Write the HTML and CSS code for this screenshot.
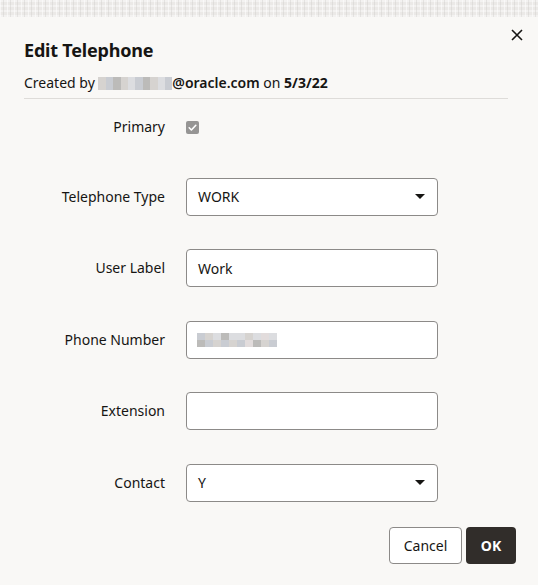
FILE: index.html
```html
<!DOCTYPE html>
<html lang="en">
<head>
<meta charset="utf-8">
<title>Edit Telephone</title>
<link rel="stylesheet" href="styles.css">
</head>
<body>
<div class="backdrop-strip"></div>
<div class="dialog">
  <div class="dialog-header">
    <div class="header-text">
      <h1 class="title">Edit Telephone</h1>
      <div class="created">Created by <span class="mosaic mosaic-email"><i class="c1"></i><i class="c2"></i><i class="c3"></i><i class="c1"></i><i class="c4"></i><i class="c2"></i><i class="c3"></i><i class="c1"></i><i class="c4"></i><i class="c2"></i></span><span class="strong">@oracle.com</span> on <span class="bold">5/3/22</span></div>
    </div>
    <button class="close" aria-label="Close">
      <svg width="12" height="12" viewBox="0 0 12 12"><path d="M1 1 L11 11 M11 1 L1 11" stroke="#161513" stroke-width="1.6" fill="none"/></svg>
    </button>
  </div>
  <div class="divider"></div>

  <div class="form">
    <div class="label">Primary</div>
    <div class="checkbox-cell">
      <span class="checkbox">
        <svg width="13" height="13" viewBox="0 0 13 13"><path d="M3.2 6.8 L5.4 9 L9.8 4.3" stroke="#ffffff" stroke-width="1.6" fill="none" stroke-linecap="round" stroke-linejoin="round"/></svg>
      </span>
    </div>

    <div class="label">Telephone Type</div>
    <div class="field select"><span class="value">WORK</span><span class="arrow"></span></div>

    <div class="label">User Label</div>
    <div class="field"><span class="value">Work</span></div>

    <div class="label">Phone Number</div>
    <div class="field"><span class="mosaic mosaic-phone"><i class="c2"></i><i class="c3"></i><i class="c1"></i><i class="c2"></i><i class="c4"></i><i class="c1"></i><i class="c3"></i><i class="c2"></i><i class="c4"></i><i class="c1"></i><i class="c4"></i><i class="c2"></i><i class="c1"></i><i class="c5"></i><i class="c4"></i><i class="c3"></i><i class="c5"></i><i class="c1"></i><i class="c4"></i><i class="c2"></i></span></div>

    <div class="label">Extension</div>
    <div class="field"></div>

    <div class="label">Contact</div>
    <div class="field select"><span class="value">Y</span><span class="arrow"></span></div>
  </div>

  <div class="footer">
    <button class="btn btn-secondary">Cancel</button>
    <button class="btn btn-primary">OK</button>
  </div>
</div>
</body>
</html>
```

FILE: styles.css
```css
* { box-sizing: border-box; }

html, body {
  margin: 0;
  padding: 0;
  background: #f9f8f6;
  font-family: "Noto Sans", "Open Sans", sans-serif;
  color: #161513;
}

.backdrop-strip {
  height: 17px;
  background-color: #ebe9e7;
  background-image:
    repeating-linear-gradient(90deg, rgba(255,255,255,0.55) 0 1px, transparent 1px 3px, rgba(200,198,195,0.35) 3px 4px, transparent 4px 7px),
    repeating-linear-gradient(0deg, rgba(255,255,255,0.4) 0 2px, transparent 2px 5px);
}

.dialog {
  padding: 0 22px 0 24px;
}

.dialog-header {
  display: flex;
  justify-content: space-between;
  align-items: flex-start;
}

.title {
  margin: 21px 0 0;
  font-size: 18px;
  line-height: 24px;
  font-weight: 700;
  letter-spacing: -0.2px;
}

.created {
  margin-top: 11px;
  font-size: 14px;
  line-height: 20px;
  display: flex;
  align-items: center;
  white-space: pre;
}

.strong { font-weight: 600; }
.bold { font-weight: 700; }

.mosaic {
  display: inline-grid;
  grid-auto-flow: column;
}
.mosaic i { display: block; }
.mosaic-email {
  grid-template-rows: 13px;
  grid-auto-columns: 7.4px;
  height: 13px;
}
.mosaic-phone {
  grid-template-rows: 7px 7px;
  grid-auto-columns: 8px;
  margin-left: -1px;
}
.c1 { background: #d6d3d0; }
.c2 { background: #c9ccd2; }
.c3 { background: #bcbbb9; }
.c4 { background: #dcdde0; }
.c5 { background: #e2dcdc; }

.close {
  margin: 11px -8px 0 0;
  padding: 0;
  border: 0;
  background: transparent;
  width: 14px;
  height: 14px;
  display: flex;
  align-items: center;
  justify-content: center;
}

.divider {
  margin: 5px 8px 0 0;
  height: 1px;
  background: #dedcd9;
}

.form {
  display: grid;
  grid-template-columns: 141px 252px;
  grid-template-rows: 34px repeat(5, 38px);
  column-gap: 21px;
  row-gap: 33.5px;
  margin-top: 11px;
}

.label {
  font-size: 14px;
  text-align: right;
  align-self: center;
  line-height: 20px;
}

.checkbox-cell {
  display: flex;
  align-items: center;
}

.checkbox {
  width: 13px;
  height: 13px;
  border-radius: 2px;
  background: #969594;
  display: flex;
}

.field {
  background: #ffffff;
  border: 1px solid #8c8a88;
  border-radius: 4px;
  display: flex;
  align-items: center;
  padding: 0 11px;
  font-size: 14px;
}

.field .value { flex: 1; }

.arrow {
  width: 0;
  height: 0;
  border-left: 5px solid transparent;
  border-right: 5px solid transparent;
  border-top: 5px solid #161513;
  margin-right: 1px;
}

.footer {
  display: flex;
  justify-content: flex-end;
  gap: 4px;
  margin-top: 25.5px;
}

.btn {
  height: 37px;
  border-radius: 4px;
  font-family: "Noto Sans", "Open Sans", sans-serif;
  font-size: 14px;
  padding: 0;
}

.btn-secondary {
  width: 73px;
  background: #ffffff;
  border: 1px solid #8c8a88;
  color: #161513;
}

.btn-primary {
  width: 50px;
  background: #312d2a;
  border: 0;
  color: #ffffff;
  font-weight: 700;
}
```
